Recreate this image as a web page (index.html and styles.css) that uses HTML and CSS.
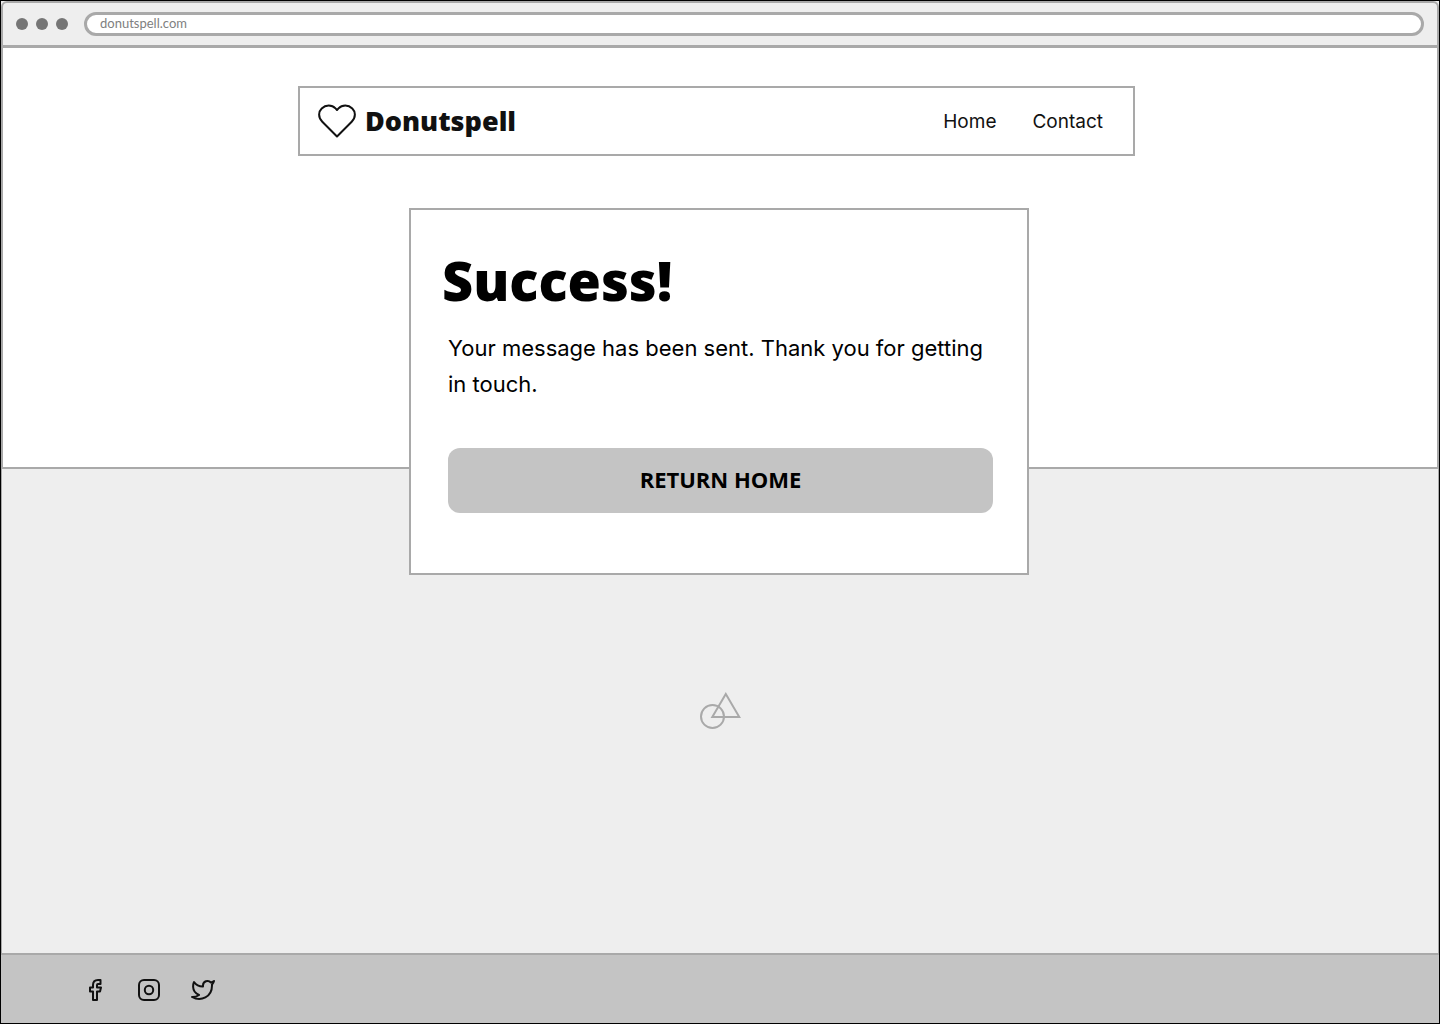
FILE: index.html
```html
<!DOCTYPE html>
<html lang="en">
<head>
<meta charset="utf-8">
<meta name="viewport" content="width=device-width, initial-scale=1">
<title>Donutspell</title>
<link rel="stylesheet" href="styles.css">
</head>
<body>
<div class="browser-bar">
  <span class="dot"></span>
  <span class="dot"></span>
  <span class="dot"></span>
  <input class="address" type="text" value="donutspell.com" aria-label="Address">
</div>
<section class="hero">
  <header class="site-header">
    <div class="nav-box">
      <a class="brand" href="#">
        <svg class="heart" viewBox="0 0 38 34" aria-hidden="true"><path d="M19 32.500 4.300 17.800C-.1 13.400 .4 7.500 3.700 4.400 7.700.6 13.800.6 17.500 4.400L19 6l1.500-1.600C24.200.6 30.300.6 34.300 4.400 37.600 7.500 38.100 13.400 33.700 17.800Z"/></svg>
        <span>Donutspell</span>
      </a>
      <nav class="links">
        <a href="#">Home</a>
        <a href="#">Contact</a>
      </nav>
    </div>
  </header>
  <main class="card">
    <h1>Success!</h1>
    <div class="card-body">
      <p>Your message has been sent. Thank you for getting in touch.</p>
      <button type="button">RETURN HOME</button>
    </div>
  </main>
</section>
<section class="artwork">
  <svg class="shapes" viewBox="0 0 42 38" aria-hidden="true"><circle cx="13.500" cy="24.500" r="11.500"/><path d="M26.800 2 40.300 25H13.300Z"/></svg>
</section>
<footer class="footer">
  <a href="#" aria-label="Facebook"><svg viewBox="0 0 24 24"><path d="M17.500 2H15c-3 0-5 2-5 5v2.500H7v4h3V22h4v-8.500h3l1-4h-4V7c0-.6.400-1 1-1h2.500Z"/></svg></a>
  <a href="#" aria-label="Instagram"><svg viewBox="0 0 24 24"><rect x="2" y="2" width="20" height="20" rx="5"/><circle cx="12" cy="12" r="4.200"/></svg></a>
  <a href="#" aria-label="Twitter"><svg viewBox="0 0 24 24"><path d="M23 3a10.900 10.900 0 0 1-3.140 1.530 4.480 4.480 0 0 0-7.860 3v1A10.660 10.660 0 0 1 3 4s-4 9 5 13a11.640 11.640 0 0 1-7 2c9 5 20 0 20-11.500a4.500 4.500 0 0 0-.08-.83A7.720 7.720 0 0 0 23 3z"/></svg></a>
</footer>
</body>
</html>
```
FILE: styles.css
```css
* {
  box-sizing: border-box;
}

body {
  margin: 0;
  min-height: 100vh;
  display: flex;
  flex-direction: column;
  border: 1px solid #000;
  background: #eee;
  color: #000;
  font-family: Inter, "Liberation Sans", sans-serif;
}

a {
  color: #111;
  text-decoration: none;
}

svg {
  display: block;
  fill: none;
  stroke: #111;
  stroke-width: 2;
  stroke-linejoin: round;
}

.browser-bar {
  display: flex;
  align-items: center;
  gap: 8px;
  padding: 9px 13px;
  border: 2px solid #a9a9a9;
  border-bottom-width: 3px;
  border-radius: 6px 6px 0 0;
  background: #eee;
}

.dot {
  width: 12px;
  height: 12px;
  border-radius: 50%;
  background: #757575;
}

.address {
  flex: 1;
  min-width: 0;
  height: 24px;
  margin-left: 8px;
  padding: 0 13px 2px;
  border: 3px solid #a9a9a9;
  border-radius: 12px;
  background: #fff;
  color: #808080;
  font: 400 13px Lato, sans-serif;
}

.hero {
  padding: 38px 18px 0 16px;
  border: 2px solid #a9a9a9;
  border-top: 0;
  background: #fff;
}

.site-header {
  padding-right: 5px;
}

.nav-box {
  display: flex;
  align-items: center;
  justify-content: space-between;
  max-width: 837px;
  min-height: 70px;
  margin: 0 auto;
  padding: 0 30px 0 18px;
  border: 2px solid #a9a9a9;
}

.brand {
  display: flex;
  align-items: center;
  gap: 9px;
  font: 800 27px/34px "Open Sans", sans-serif;
}

.heart {
  width: 38px;
  height: 34px;
}

.links {
  display: flex;
  gap: 36px;
  font-size: 19px;
}

.card {
  position: relative;
  max-width: 620px;
  margin: 52px auto -108px;
  padding: 36px 32px 60px 31px;
  border: 2px solid #a9a9a9;
  background: #fff;
}

h1 {
  margin: 0;
  font: 800 54px/68px "Open Sans", sans-serif;
}

.card-body {
  padding: 16px 2px 0 6px;
}

p {
  margin: 0 0 46px;
  font-size: 22px;
  line-height: 36px;
}

button {
  display: block;
  width: 100%;
  height: 65px;
  padding: 0 0 4px;
  border: 0;
  border-radius: 12px;
  background: #c4c4c4;
  color: #000;
  font: 700 22px "Open Sans", sans-serif;
}

.artwork {
  flex: 1;
  display: flex;
  align-items: center;
  justify-content: center;
  min-height: 240px;
  border: solid #a9a9a9;
  border-width: 0 1px;
}

.shapes {
  width: 42px;
  height: 38px;
  stroke: #a9a9a9;
  stroke-linejoin: miter;
}

.footer {
  display: flex;
  align-items: center;
  gap: 30px;
  min-height: 70px;
  padding: 2px 82px 0;
  border-top: 2px solid #a9a9a9;
  background: #c4c4c4;
}

.footer svg {
  width: 24px;
  height: 24px;
}
```
